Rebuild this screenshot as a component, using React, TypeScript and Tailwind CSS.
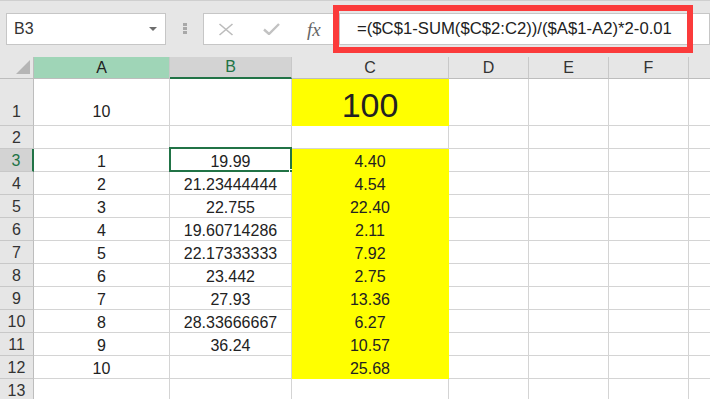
import React from "react";

const colW = [136, 122, 157, 80, 80, 80, 80];
const colNames = ["A", "B", "C", "D", "E", "F", "G"];

type Row = { n: number; a?: string; b?: string; c?: string; h: number };

const rows: Row[] = [
  { n: 1, a: "10", c: "100", h: 47 },
  { n: 2, h: 23 },
  { n: 3, a: "1", b: "19.99", c: "4.40", h: 23 },
  { n: 4, a: "2", b: "21.23444444", c: "4.54", h: 23 },
  { n: 5, a: "3", b: "22.755", c: "22.40", h: 23 },
  { n: 6, a: "4", b: "19.60714286", c: "2.11", h: 23 },
  { n: 7, a: "5", b: "22.17333333", c: "7.92", h: 23 },
  { n: 8, a: "6", b: "23.442", c: "2.75", h: 23 },
  { n: 9, a: "7", b: "27.93", c: "13.36", h: 23 },
  { n: 10, a: "8", b: "28.33666667", c: "6.27", h: 23 },
  { n: 11, a: "9", b: "36.24", c: "10.57", h: 23 },
  { n: 12, a: "10", c: "25.68", h: 23 },
  { n: 13, h: 23 },
];

function isYellow(r: number, ci: number) {
  return ci === 2 && (r === 1 || (r >= 3 && r <= 12));
}

export default function App() {
  return (
    <div
      className="w-[710px] h-[399px] overflow-hidden bg-[#e6e6e6] text-[#222]"
      style={{ fontFamily: '"Liberation Sans", Arial, sans-serif' }}
    >
      {/* Toolbar */}
      <div className="relative h-[57px] border-t border-[#cfcfcf] flex items-start pt-[12px]">
        {/* Name box */}
        <div className="shrink-0 ml-[6px] w-[160px] h-[32px] bg-white border border-[#c6c6c6] flex items-center pl-[7px] pr-[8px]">
          <span className="text-[16px] text-[#333] leading-none">B3</span>
          <div className="ml-auto w-0 h-0 border-l-[4px] border-r-[4px] border-t-[4px] border-l-transparent border-r-transparent border-t-[#6d6d6d]" />
        </div>
        {/* dots */}
        <div className="shrink-0 ml-[17px] mt-[10px] flex flex-col gap-[1px]">
          <div className="w-[4px] h-[3px] bg-[#a8a8a8]" />
          <div className="w-[4px] h-[3px] bg-[#a8a8a8]" />
          <div className="w-[4px] h-[3px] bg-[#a8a8a8]" />
        </div>
        {/* formula buttons */}
        <div className="shrink-0 ml-[16px] w-[134px] h-[32px] bg-white border border-[#c6c6c6] flex items-center">
          <svg className="ml-[14px]" width="16" height="13" viewBox="0 0 16 13">
            <path d="M1.5 1 L14.5 12 M14.5 1 L1.5 12" stroke="#bcbcbc" strokeWidth="1.6" fill="none" />
          </svg>
          <svg className="ml-[29px]" width="17" height="12" viewBox="0 0 17 12">
            <path d="M1 6.5 L6 11 L16 1" stroke="#c2c2c2" strokeWidth="2.4" fill="none" />
          </svg>
          <span
            className="ml-[27px] text-[19px] italic text-[#666] leading-none"
            style={{ fontFamily: '"Liberation Serif", "Times New Roman", serif' }}
          >
            fx
          </span>
        </div>
        {/* formula input */}
        <div className="ml-[2px] flex-1 h-[32px] bg-white border border-[#c6c6c6] flex items-center pl-[17px]">
          <span className="text-[16.7px] text-[#222] leading-none whitespace-nowrap">
            =($C$1-SUM($C$2:C2))/($A$1-A2)*2-0.01
          </span>
        </div>
        {/* red highlight */}
        <div className="absolute left-[333px] top-[4px] w-[360px] h-[48px] border-[6px] border-[#fb3b3b]" />
      </div>

      {/* Sheet */}
      <div className="bg-white">
        {/* column headers */}
        <div className="flex h-[22px] bg-[#e6e6e6]">
          <div className="relative shrink-0 w-[34px] h-full border-r border-b border-[#bdbdbd]">
            <div
              className="absolute right-[3px] bottom-[4px]"
              style={{ width: 0, height: 0, borderBottom: "14px solid #b5b5b5", borderLeft: "14px solid transparent" }}
            />
          </div>
          {colNames.map((c, i) => {
            const cls =
              c === "A"
                ? "bg-[#9fd5b7] text-[#222] border-b border-[#bdbdbd]"
                : c === "B"
                ? "bg-[#d3d3d3] text-[#217346] border-b-2 border-b-[#217346]"
                : "text-[#333] border-b border-[#bdbdbd]";
            return (
              <div
                key={c}
                className={`shrink-0 h-full flex items-center justify-center text-[16px] border-r border-r-[#c8c8c8] ${cls}`}
                style={{ width: colW[i] }}
              >
                {c === "G" ? "" : c}
              </div>
            );
          })}
        </div>

        {/* rows */}
        {rows.map((r) => (
          <div key={r.n} className="flex" style={{ height: r.h }}>
            <div
              className={`shrink-0 w-[34px] h-full flex items-end justify-center text-[16px] leading-[18px] border-b border-[#c8c8c8] ${
                r.n === 1 ? "pb-[4px]" : "pb-[1px]"
              } ${
                r.n === 3
                  ? "bg-[#d3d3d3] text-[#217346] border-r-2 border-r-[#217346]"
                  : "bg-[#e6e6e6] text-[#333] border-r border-r-[#bdbdbd]"
              }`}
            >
              {r.n}
            </div>
            {colNames.map((c, ci) => {
              const val = ci === 0 ? r.a : ci === 1 ? r.b : ci === 2 ? r.c : undefined;
              const yellow = isYellow(r.n, ci);
              const big = r.n === 1 && ci === 2;
              const sel = r.n === 3 && ci === 1;
              return (
                <div
                  key={c}
                  className={`relative shrink-0 h-full flex items-end justify-center border-r border-b ${
                    yellow ? "bg-[#ffff00] border-[#ffff00]" : "bg-white border-[#d4d4d4]"
                  } ${
                    big
                      ? "text-[34px] leading-[38px] pb-[1px]"
                      : r.n === 1
                      ? "text-[16px] leading-[18px] pb-[4px]"
                      : "text-[16px] leading-[18px] pb-[0px]"
                  }`}
                  style={{ width: colW[ci] }}
                >
                  {val}
                  {sel && (
                    <div className="absolute left-[-1px] top-[-2px] right-[-1px] bottom-[-1px] border-2 border-[#217346]">
                      <div className="absolute right-[-4px] bottom-[-4px] w-[5px] h-[5px] bg-[#217346] border border-white" />
                    </div>
                  )}
                </div>
              );
            })}
          </div>
        ))}
      </div>
    </div>
  );
}
